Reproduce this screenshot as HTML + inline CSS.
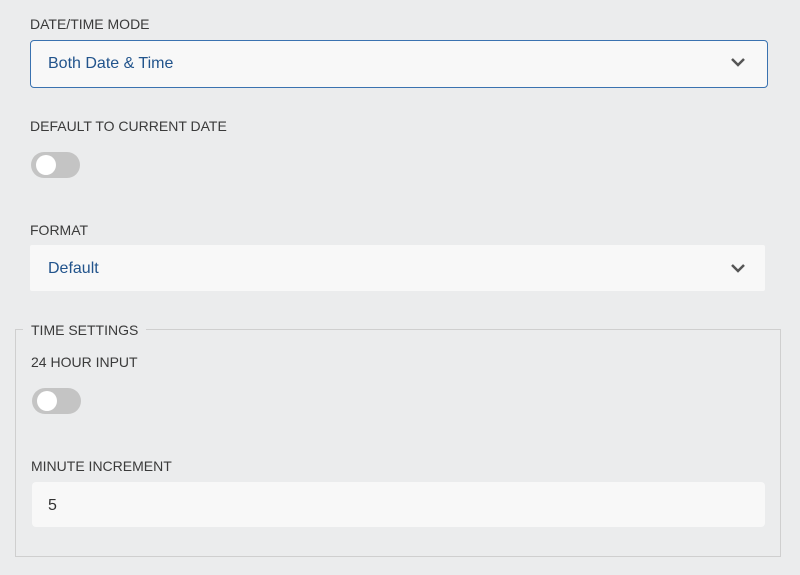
<!DOCTYPE html>
<html><head><style>
*{margin:0;padding:0;box-sizing:border-box}
body{width:800px;height:575px;background:#ebeced;font-family:"Liberation Sans",sans-serif;position:relative;overflow:hidden}
.l{position:absolute;font-size:14px;color:#3a3a3a;line-height:16px;white-space:nowrap}
.box{position:absolute;background:#f8f8f8;border-radius:4px}
.v{position:absolute;font-size:16px;line-height:18px;color:#22548c}
.tg{position:absolute;width:49px;height:26px;border-radius:13px;background:#c4c4c4}
.tg:after{content:"";position:absolute;left:5px;top:3px;width:20px;height:20px;border-radius:50%;background:#fff}
.chev{position:absolute}
</style></head><body>
<div class="l" style="left:30px;top:16px">DATE/TIME MODE</div>
<div class="box" style="left:30px;top:40px;width:738px;height:48px;border:1px solid #3a72b0"></div>
<div class="v" style="left:48px;top:55px">Both Date &amp; Time</div>
<svg class="chev" style="left:730px;top:57px" width="16" height="10" viewBox="0 0 16 10"><path d="M2 2L8 8L14 2" fill="none" stroke="#555" stroke-width="2.5"/></svg>

<div class="l" style="left:30px;top:118px">DEFAULT TO CURRENT DATE</div>
<div class="tg" style="left:31px;top:152px"></div>

<div class="l" style="left:30px;top:222px">FORMAT</div>
<div class="box" style="left:30px;top:245px;width:735px;height:46px;border-radius:2px"></div>
<div class="v" style="left:48px;top:260px">Default</div>
<svg class="chev" style="left:730px;top:263px" width="16" height="10" viewBox="0 0 16 10"><path d="M2 2L8 8L14 2" fill="none" stroke="#555" stroke-width="2.5"/></svg>

<div style="position:absolute;left:15px;top:329px;width:766px;height:228px;border:1px solid #cfcfcf"></div>
<div class="l" style="left:23px;top:322px;background:#ebeced;padding:0 8px">TIME SETTINGS</div>
<div class="l" style="left:31px;top:354px">24 HOUR INPUT</div>
<div class="tg" style="left:32px;top:388px"></div>
<div class="l" style="left:31px;top:458px">MINUTE INCREMENT</div>
<div class="box" style="left:32px;top:482px;width:733px;height:45px"></div>
<div class="v" style="left:48px;top:497px;color:#333">5</div>
</body></html>
